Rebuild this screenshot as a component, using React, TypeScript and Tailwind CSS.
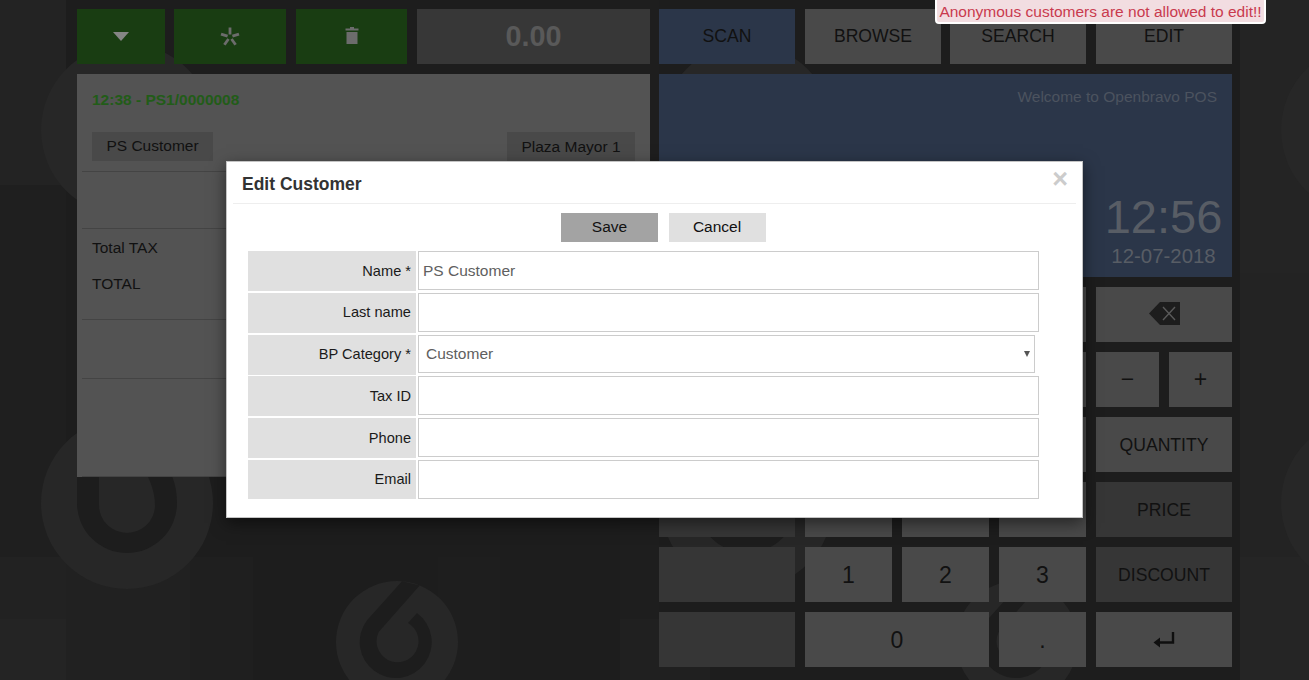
import React from "react";

const SMALL_LOGO =
  "M0,-61A61,61 0 1,1 0,61A61,61 0 1,1 0,-61Z M5,-60.8L22.7,-56.6L-18.3,-10A21,21 0 1,0 11,-19L20,-29A36,36 0 1,1 -30,-21.7Z";
const BIG_LOGO =
  "M0,-86A86,86 0 1,1 0,86A86,86 0 1,1 0,-86Z M-50,-45V0A50,50 0 0,0 50,0C50,-18 45,-33 32,-45Z M-28,-45V2A28,28 0 0,0 28,2C28,-12 22,-28 10,-45Z";

function Background() {
  const tiles: [number, number, number, number, string][] = [
    [0, 0, 66, 185, "#232323"],
    [0, 185, 66, 372, "#1f1f1f"],
    [0, 557, 66, 62, "#222222"],
    [0, 619, 66, 61, "#242424"],
    [66, 0, 1174, 680, "#1d1d1d"],
    [66, 557, 124, 123, "#212121"],
    [190, 557, 63, 123, "#1f1f1f"],
    [438, 557, 62, 123, "#1e1e1e"],
    [620, 0, 39, 680, "#1e1e1e"],
    [620, 619, 90, 61, "#202020"],
    [1240, 0, 69, 273, "#242424"],
    [1240, 273, 69, 284, "#232323"],
    [1240, 557, 69, 123, "#252525"],
  ];
  const big: [number, number][] = [
    [127, 130],
    [127, 503],
    [747, 130],
    [747, 503],
    [1367, 130],
    [1367, 503],
  ];
  const small: [number, number][] = [
    [397, 642],
    [1017, 642],
    [397, 269],
    [1017, 269],
  ];
  return (
    <svg className="absolute inset-0" width="1309" height="680" viewBox="0 0 1309 680">
      {tiles.map(([x, y, w, h, c], i) => (
        <rect key={i} x={x} y={y} width={w} height={h} fill={c} />
      ))}
      {big.map(([x, y], i) => (
        <path key={i} transform={`translate(${x} ${y})`} d={BIG_LOGO} fill="#272727" fillRule="evenodd" />
      ))}
      {small.map(([x, y], i) => (
        <path key={i} transform={`translate(${x} ${y})`} d={SMALL_LOGO} fill="#272727" fillRule="evenodd" />
      ))}
    </svg>
  );
}

function Btn({
  className,
  children,
}: {
  className: string;
  children?: React.ReactNode;
}) {
  return <div className={`flex h-[55px] shrink-0 items-center justify-center ${className}`}>{children}</div>;
}

function Label({ w, c, children }: { w: string; c: string; children?: React.ReactNode }) {
  return <Btn className={`${w} ${c} pt-[1px] text-[17.6px] text-[#111111]`}>{children}</Btn>;
}

function Digit({ w, children }: { w: string; children?: React.ReactNode }) {
  return <Btn className={`${w} bg-[#494949] pt-[1px] text-[23px] text-[#111111]`}>{children}</Btn>;
}

function Field({ label, value, last, low }: { label: string; value?: string; last?: boolean; low?: boolean }) {
  return (
    <div className={`flex ${last ? "h-[39px]" : "h-[40px]"} gap-[2px]`}>
      <div
        className={`flex w-[168px] items-center justify-end bg-[#e0e0e0] pr-[5px] text-[14.6px] text-[#1a1a1a] ${
          low ? "pt-[2px]" : ""
        }`}
      >
        {label}
      </div>
      <div className="flex h-[39px] w-[621px] items-center border border-[#cccccc] bg-white pl-[4px] text-[15.5px] text-[#606060]">
        {value}
      </div>
    </div>
  );
}

export default function App() {
  return (
    <div className="relative h-[680px] w-[1309px] overflow-hidden bg-[#1d1d1d] font-['Liberation_Sans',Arial,sans-serif]">
      <Background />

      <div className="relative flex pl-[77px] pt-[9px]">
        {/* left column */}
        <div className="flex w-[573px] flex-col">
          <div className="flex gap-[9px]">
            <Btn className="w-[88px] bg-[#193d12]">
              <svg width="16" height="9" viewBox="0 0 16 9">
                <path d="M0 0H16L8 9Z" fill="#858585" />
              </svg>
            </Btn>
            <Btn className="w-[112px] bg-[#193d12]">
              <svg width="20" height="20" viewBox="-10 -10 20 20" className="mt-[1px]">
                <g stroke="#6c6c6c" strokeWidth="2.8">
                  <path d="M0 -2.5V-9.5" />
                  <path d="M-2.4 -0.8L-9 -2.9" />
                  <path d="M2.4 -0.8L9 -2.9" />
                  <path d="M-1.5 2L-5.6 7.7" />
                  <path d="M1.5 2L5.6 7.7" />
                </g>
              </svg>
            </Btn>
            <Btn className="ml-[1px] w-[111px] bg-[#193d12]">
              <svg width="14" height="17" viewBox="0 0 14 17" className="mt-[-2px]">
                <path d="M1 1.5H5V0H9V1.5H13.5V3.5H0.5V1.5Z M1.5 5H12.5V17H1.5Z" fill="#6c6c6c" />
              </svg>
            </Btn>
            <Btn className="ml-[1px] w-[233px] bg-[#373737] text-[28.8px] font-bold text-[#595959]">0.00</Btn>
          </div>

          <div className="mt-[10px] flex h-[403px] flex-col bg-[#535353] px-[5px] text-[15.5px] text-[#111111]">
            <div className="h-[98px] border-b border-[#444444] px-[10px]">
              <div className="pt-[17px] text-[15.5px] leading-[18px] font-bold text-[#225c18]">12:38 - PS1/0000008</div>
              <div className="mt-[23px] flex justify-between">
                <div className="flex h-[29px] w-[121px] items-center justify-center bg-[#494949] pb-[1px]">
                  PS Customer
                </div>
                <div className="flex h-[29px] w-[128px] items-center justify-center bg-[#494949] pt-[1px]">
                  Plaza Mayor 1
                </div>
              </div>
            </div>
            <div className="h-[57px] border-b border-[#444444]" />
            <div className="h-[91px] border-b border-[#444444] px-[10px] pt-[10px] leading-[18px]">
              <div>Total TAX</div>
              <div className="mt-[18px]">TOTAL</div>
            </div>
            <div className="h-[59px] border-b border-[#444444]" />
            <div className="h-[98px] border-b border-[#444444]" />
          </div>
        </div>

        {/* right column */}
        <div className="ml-[9px] flex w-[573px] flex-col">
          <div className="flex text-[17.6px] text-[#111111]">
            <Btn className="w-[136px] bg-[#2b3649]">SCAN</Btn>
            <Btn className="ml-[10px] w-[136px] bg-[#494949]">BROWSE</Btn>
            <Btn className="ml-[9px] w-[136px] bg-[#494949]">SEARCH</Btn>
            <Btn className="ml-[10px] w-[136px] bg-[#494949]">EDIT</Btn>
          </div>

          <div className="mt-[10px] flex h-[203px] flex-col items-end bg-[#2b3649] pt-[14px] text-[#4c535f]">
            <div className="mr-[15px] text-[15.5px] leading-[18px]">Welcome to Openbravo POS</div>
            <div className="mr-[10px] mt-[84px] flex w-[117px] flex-col items-center text-[#585d65]">
              <div className="whitespace-nowrap text-[47px] leading-[54px]">12:56</div>
              <div className="whitespace-nowrap text-[20.4px] leading-[24px]">12-07-2018</div>
            </div>
          </div>

          <div className="mt-[10px] flex flex-col gap-[10px]">
            <div className="flex">
              <Btn className="w-[136px] bg-[#363636]" />
              <Digit w="ml-[10px] w-[87px]" />
              <Digit w="ml-[10px] w-[87px]" />
              <Digit w="ml-[10px] w-[87px]" />
              <Btn className="ml-[10px] w-[136px] bg-[#494949]">
                <svg width="32" height="23" viewBox="0 0 32 23" className="mt-[-2px] ml-[2px]">
                  <path d="M0 11.5L11 0H31V23H11Z" fill="#1d1d1d" />
                  <path d="M14 5L26 18M26 5L14 18" stroke="#5a5a5a" strokeWidth="1.4" fill="none" />
                </svg>
              </Btn>
            </div>
            <div className="flex">
              <Btn className="w-[136px] bg-[#363636]" />
              <Digit w="ml-[10px] w-[87px]" />
              <Digit w="ml-[10px] w-[87px]" />
              <Digit w="ml-[10px] w-[87px]" />
              <Btn className="ml-[10px] w-[63px] bg-[#494949] text-[23px] text-[#111111]">−</Btn>
              <Btn className="ml-[10px] w-[63px] bg-[#494949] text-[23px] text-[#111111]">+</Btn>
            </div>
            <div className="flex">
              <Btn className="w-[136px] bg-[#363636]" />
              <Digit w="ml-[10px] w-[87px]">9</Digit>
              <Digit w="ml-[10px] w-[87px]">8</Digit>
              <Digit w="ml-[10px] w-[87px]">7</Digit>
              <Label w="ml-[10px] w-[136px]" c="bg-[#494949]">QUANTITY</Label>
            </div>
            <div className="flex">
              <Btn className="w-[136px] bg-[#363636]" />
              <Digit w="ml-[10px] w-[87px]" />
              <Digit w="ml-[10px] w-[87px]" />
              <Digit w="ml-[10px] w-[87px]" />
              <Label w="ml-[10px] w-[136px]" c="bg-[#363636]">PRICE</Label>
            </div>
            <div className="flex">
              <Btn className="w-[136px] bg-[#363636]" />
              <Digit w="ml-[10px] w-[87px]">1</Digit>
              <Digit w="ml-[10px] w-[87px]">2</Digit>
              <Digit w="ml-[10px] w-[87px]">3</Digit>
              <Label w="ml-[10px] w-[136px]" c="bg-[#363636]">DISCOUNT</Label>
            </div>
            <div className="flex">
              <Btn className="w-[136px] bg-[#363636]" />
              <Digit w="ml-[10px] w-[184px]">0</Digit>
              <Digit w="ml-[10px] w-[87px]">.</Digit>
              <Btn className="ml-[10px] w-[136px] bg-[#494949]">
                <svg width="22" height="16" viewBox="0 0 22 16">
                  <path d="M20 0V10.5H3" fill="none" stroke="#0f0f0f" strokeWidth="2.4" />
                  <path d="M7 5.5V15.5L0.5 10.5Z" fill="#0f0f0f" />
                </svg>
              </Btn>
            </div>
          </div>
        </div>
      </div>

      {/* modal */}
      <div className="absolute left-[226px] top-[161px] h-[357px] w-[857px] border border-[#c4c4c4] bg-white shadow-[0_5px_15px_rgba(0,0,0,0.5)]">
        <div className="relative mx-[6px] h-[42px] border-b border-[#eeeeee]">
          <div className="pl-[9px] pt-[12px] text-[17.5px] leading-[20px] font-bold text-[#333333]">Edit Customer</div>
          <div className="absolute right-[8px] top-[2px] text-[27px] leading-[30px] font-bold text-[#cccccc]">×</div>
        </div>
        <div className="mt-[9px] flex justify-center pl-[17px]">
          <div className="flex h-[29px] w-[97px] items-center justify-center bg-[#a3a3a3] pb-[1px] pl-[1px] text-[15.5px] text-[#111111]">
            Save
          </div>
          <div className="ml-[11px] flex h-[29px] w-[97px] items-center justify-center bg-[#e0e0e0] pb-[1px] text-[15.5px] text-[#111111]">
            Cancel
          </div>
        </div>
        <div className="ml-[21px] mt-[9.3px] flex w-[791px] flex-col gap-[1.7px]">
          <Field label="Name *" value="PS Customer" low />
          <Field label="Last name" />
          <div className="flex h-[40px] gap-[2px]">
            <div className="flex w-[168px] items-center justify-end bg-[#e0e0e0] pr-[5px] text-[14.6px] text-[#1a1a1a]">
              BP Category *
            </div>
            <div className="relative flex h-[38px] w-[617px] items-center border border-[#cccccc] bg-white pl-[7px] text-[15.5px] text-[#606060]">
              Customer
              <svg width="6" height="6" viewBox="0 0 6 6" className="absolute right-[4px] top-[15px]">
                <path d="M0 0H6L3 6Z" fill="#555555" />
              </svg>
            </div>
          </div>
          <Field label="Tax ID" low />
          <Field label="Phone" low />
          <Field label="Email" last low />
        </div>
      </div>

      {/* alert */}
      <div className="absolute left-[935px] top-[-4px] flex h-[28px] w-[331px] items-center justify-center whitespace-nowrap rounded-[4px] border-2 border-white bg-[#f2dde1] pt-[4px] text-[15.5px] text-[#c93a4e]">
        Anonymous customers are not allowed to edit!!
      </div>
    </div>
  );
}
